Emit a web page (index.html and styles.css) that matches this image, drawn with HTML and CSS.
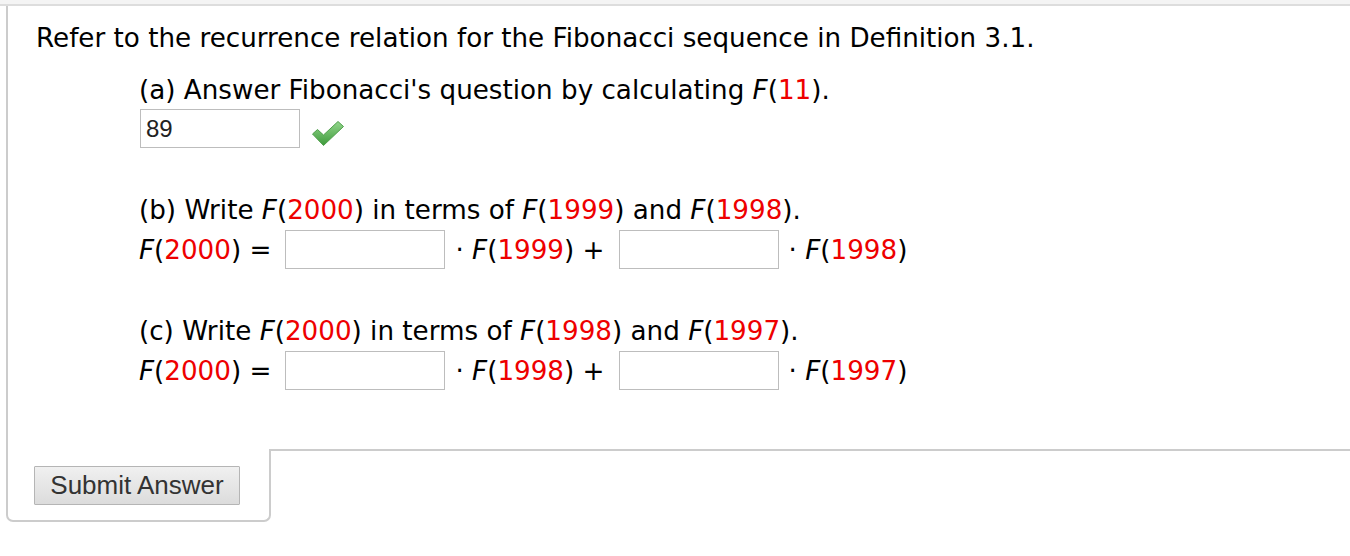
FILE: index.html
```html
<!DOCTYPE html>
<html lang="en">
<head>
<meta charset="UTF-8" />
<title>Fibonacci Question</title>
<link rel="stylesheet" href="styles.css">
</head>
<body>
<div class="topbar"></div>
<div class="question">
  <p class="intro">Refer to the recurrence relation for the Fibonacci sequence in Definition 3.1.</p>

  <div class="part">
    <p class="label">(a) Answer Fibonacci's question by calculating <i>F</i>(<span class="red">11</span>).</p>
    <div class="row first">
      <input type="text" class="answer" value="89">
      <svg class="check" width="32" height="25" viewBox="0 0 32 25">
        <defs>
          <linearGradient id="chk" x1="0" y1="0" x2="0" y2="1">
            <stop offset="0" stop-color="#93d68c"/>
            <stop offset="1" stop-color="#3e9a3b"/>
          </linearGradient>
        </defs>
        <path d="M0.5 13 L5.5 8.5 L11.5 14 L26 0.5 L31.5 5.5 L11.5 24.5 Z" fill="url(#chk)" stroke="#4f9f4b" stroke-width="1" stroke-linejoin="round"/>
      </svg>
    </div>
  </div>

  <div class="part">
    <p class="label">(b) Write <i>F</i>(<span class="red">2000</span>) in terms of <i>F</i>(<span class="red">1999</span>) and <i>F</i>(<span class="red">1998</span>).</p>
    <div class="row">
      <span><i>F</i>(<span class="red">2000</span>) =</span>
      <input type="text" class="answer">
      <span>&middot; <i>F</i>(<span class="red">1999</span>) +</span>
      <input type="text" class="answer">
      <span>&middot; <i>F</i>(<span class="red">1998</span>)</span>
    </div>
  </div>

  <div class="part">
    <p class="label">(c) Write <i>F</i>(<span class="red">2000</span>) in terms of <i>F</i>(<span class="red">1998</span>) and <i>F</i>(<span class="red">1997</span>).</p>
    <div class="row">
      <span><i>F</i>(<span class="red">2000</span>) =</span>
      <input type="text" class="answer">
      <span>&middot; <i>F</i>(<span class="red">1998</span>) +</span>
      <input type="text" class="answer">
      <span>&middot; <i>F</i>(<span class="red">1997</span>)</span>
    </div>
  </div>
</div>
<div class="footer">
  <div class="submit-box">
    <button class="submit">Submit Answer</button>
  </div>
  <div class="filler"></div>
</div>
</body>
</html>
```

FILE: styles.css
```css
body { margin: 0; background: #fff; font-family: "DejaVu Sans", Verdana, sans-serif; color: #000; }
.topbar { height: 4px; background: #f4f4f4; border-bottom: 2px solid #dddddd; }
.question { margin-left: 6px; border-left: 2px solid #cccccc; padding: 14px 0 59px 28px; }
p { margin: 0; }
.intro { font-size: 26.2px; line-height: 36px; }
.part { margin: 16px 0 0 103px; }
.part + .part { margin-top: 44px; }
.label { font-size: 26.2px; line-height: 36px; }
.row { display: flex; align-items: center; height: 39px; margin-top: 2px; font-size: 26.2px; line-height: 36px; }
.row.first { margin-top: 1px; }
.red { color: #ee0000; }
i { font-style: italic; }
.answer { box-sizing: border-box; width: 160px; height: 39px; border: 1px solid #bdbdbd; padding: 0 5px; font-family: "Liberation Sans", Arial, sans-serif; font-size: 24px; color: #222; margin: 0 10px 0 14px; }
.row .answer:first-child { margin-left: 1px; }
.check { align-self: flex-start; margin: 12px 0 0 2px; }
.footer { display: flex; }
.submit-box { width: 235px; margin-left: 6px; border: 2px solid #cccccc; border-top: none; border-radius: 0 0 7px 7px; padding: 17px 0 15px 26px; }
.filler { flex: 1; border-top: 2px solid #cccccc; }
.submit { width: 206px; height: 39px; font-family: "Liberation Sans", Arial, sans-serif; font-size: 26px; color: #333; background: linear-gradient(#f0f0f0, #dcdcdc); border: 1px solid #b5b5b5; border-radius: 1px; padding: 0; cursor: pointer; }
```
